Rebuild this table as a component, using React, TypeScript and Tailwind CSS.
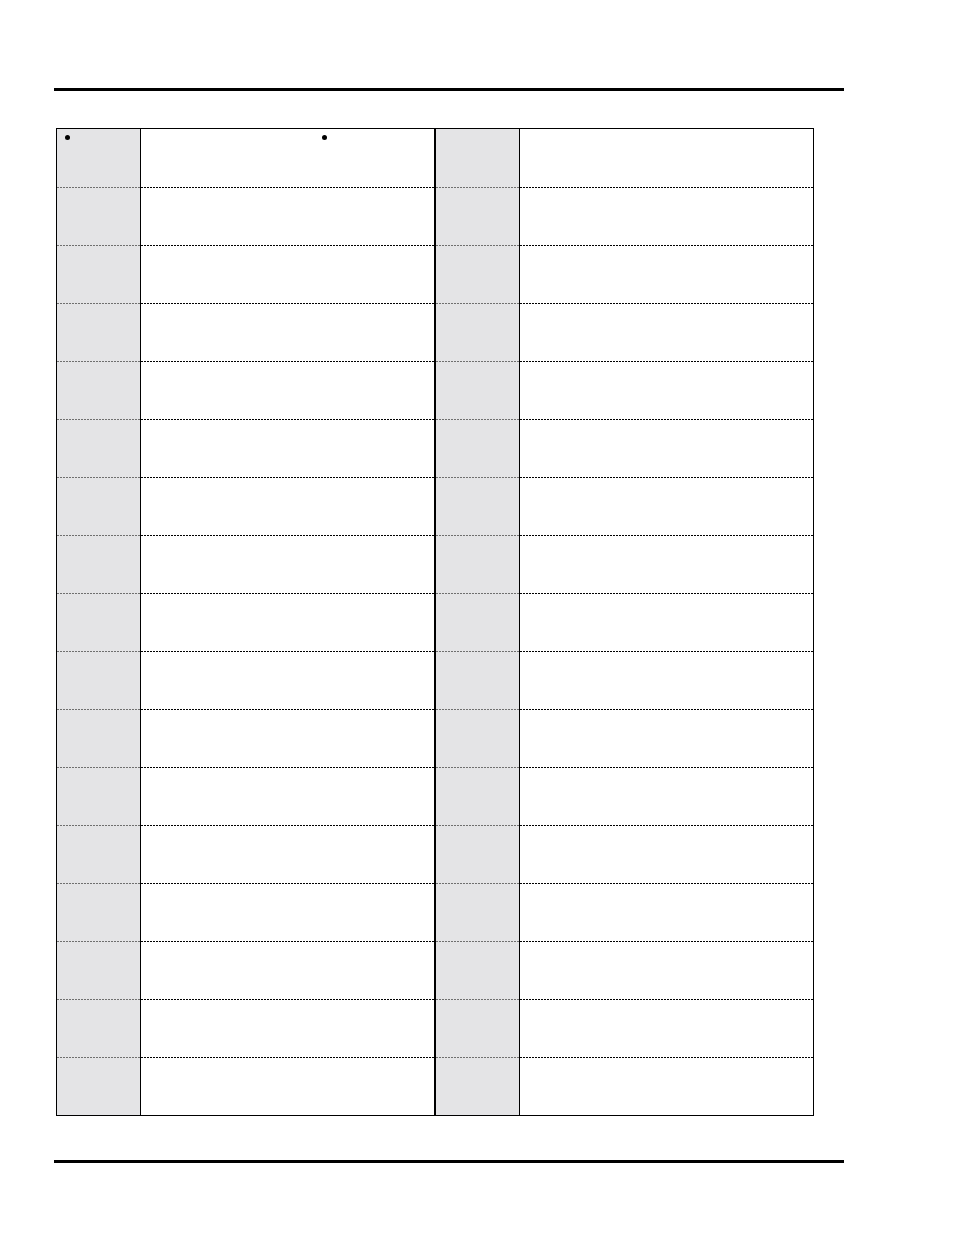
import React from "react";

const ROWS = 17;

// dotted rule, 2px dash / 1px gap
const darkRule =
  "h-px bg-[repeating-linear-gradient(to_right,#000_0_2px,transparent_2px_3px)]";
const greyRule =
  "h-px bg-[repeating-linear-gradient(to_right,#6f6f6f_0_2px,transparent_2px_3px)]";

function Cell({
  grey,
  last,
  dot,
}: {
  grey?: boolean;
  last: boolean;
  dot?: string;
}) {
  return (
    <div className={`flex flex-col ${grey ? "bg-[#e4e4e6]" : "bg-white"}`}>
      <div className="flex-1 relative">
        {dot && <span className={`absolute w-[5px] h-[5px] rounded-full bg-black ${dot}`} />}
      </div>
      {!last && <div className={grey ? greyRule : darkRule} />}
    </div>
  );
}

function Row({ index }: { index: number }) {
  const last = index === ROWS - 1;
  const height = index === 0 ? "h-[59px]" : last ? "h-[57px]" : "h-[58px]";
  return (
    <div className={`grid grid-cols-[83px_1px_293px_2px_83px_1px_293px] ${height}`}>
      <Cell grey last={last} dot={index === 0 ? "left-[8px] top-[6px]" : undefined} />
      <div className="bg-black" />
      <Cell last={last} dot={index === 0 ? "left-[181px] top-[6px]" : undefined} />
      <div className="bg-black" />
      <Cell grey last={last} />
      <div className="bg-black" />
      <Cell last={last} />
    </div>
  );
}

export default function App() {
  return (
    <div
      className="w-[954px] h-[1235px] bg-white flex flex-col text-black"
      style={{ fontFamily: '"Liberation Sans", Arial, sans-serif' }}
    >
      {/* TOP RULE */}
      <div className="mt-[88px] ml-[54px] w-[790px] h-[3px] bg-black" />

      {/* TABLE */}
      <div className="mt-[37px] ml-[56px] w-[758px] border border-black flex flex-col">
        {Array.from({ length: ROWS }).map((_, i) => (
          <Row key={i} index={i} />
        ))}
      </div>

      {/* BOTTOM RULE */}
      <div className="mt-[44px] ml-[54px] w-[790px] h-[3px] bg-black" />
    </div>
  );
}
